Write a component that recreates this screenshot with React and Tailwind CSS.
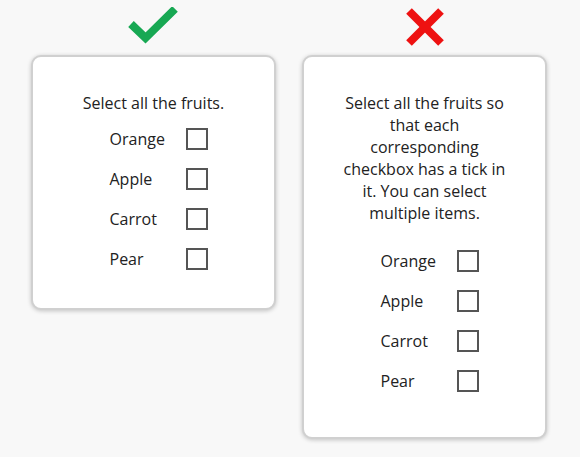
const fruits = ['Orange', 'Apple', 'Carrot', 'Pear']

function CheckMark() {
  return (
    <svg width="56" height="40" viewBox="0 0 56 40" className="block">
      <polyline points="5,17 19.5,31 49,2" fill="none" stroke="#17a853" strokeWidth="8" strokeLinejoin="miter" />
    </svg>
  )
}

function Cross() {
  return (
    <svg width="40" height="40" viewBox="0 0 40 40" className="block">
      <line x1="4" y1="4" x2="36" y2="36" stroke="#ee1111" strokeWidth="8" />
      <line x1="36" y1="4" x2="4" y2="36" stroke="#ee1111" strokeWidth="8" />
    </svg>
  )
}

function FruitList({ className }) {
  return (
    <div className={`flex flex-col items-center ${className}`}>
      {fruits.map(fruit => (
        <div key={fruit} className="flex h-[40px] items-center pl-[10px]">
          <span className="w-[76px]">{fruit}</span>
          <span className="h-[22px] w-[22px] border-2 border-[#555]" />
        </div>
      ))}
    </div>
  )
}

export default function App() {
  return (
    <div
      className="flex min-h-[457px] gap-[26px] bg-[#f8f8f8] pl-[31px] text-[16px] text-[#222]"
      style={{ fontFamily: '"Open Sans", sans-serif' }}
    >
      {/* good example */}
      <div className="flex w-[245px] flex-col">
        <div className="flex h-[55px] items-start justify-center pt-[7px]">
          <CheckMark />
        </div>
        <div className="rounded-[10px] border-2 border-[#d0d0d0] bg-white pt-[35px] pb-[29px] shadow-[0_1px_4px_rgba(0,0,0,0.22)]">
          <p className="text-center leading-[22px]">Select all the fruits.</p>
          <FruitList className="mt-[5px]" />
        </div>
      </div>

      {/* bad example */}
      <div className="flex w-[245px] flex-col">
        <div className="flex h-[55px] items-start justify-center pt-[7px]">
          <Cross />
        </div>
        <div className="rounded-[10px] border-2 border-[#d0d0d0] bg-white pt-[35px] pb-[36px] shadow-[0_1px_4px_rgba(0,0,0,0.22)]">
          <p className="mx-auto w-[172px] text-center leading-[22px]">
            Select all the fruits so that each corresponding checkbox has a tick in it. You can select multiple items.
          </p>
          <FruitList className="mt-[17px]" />
        </div>
      </div>
    </div>
  )
}
